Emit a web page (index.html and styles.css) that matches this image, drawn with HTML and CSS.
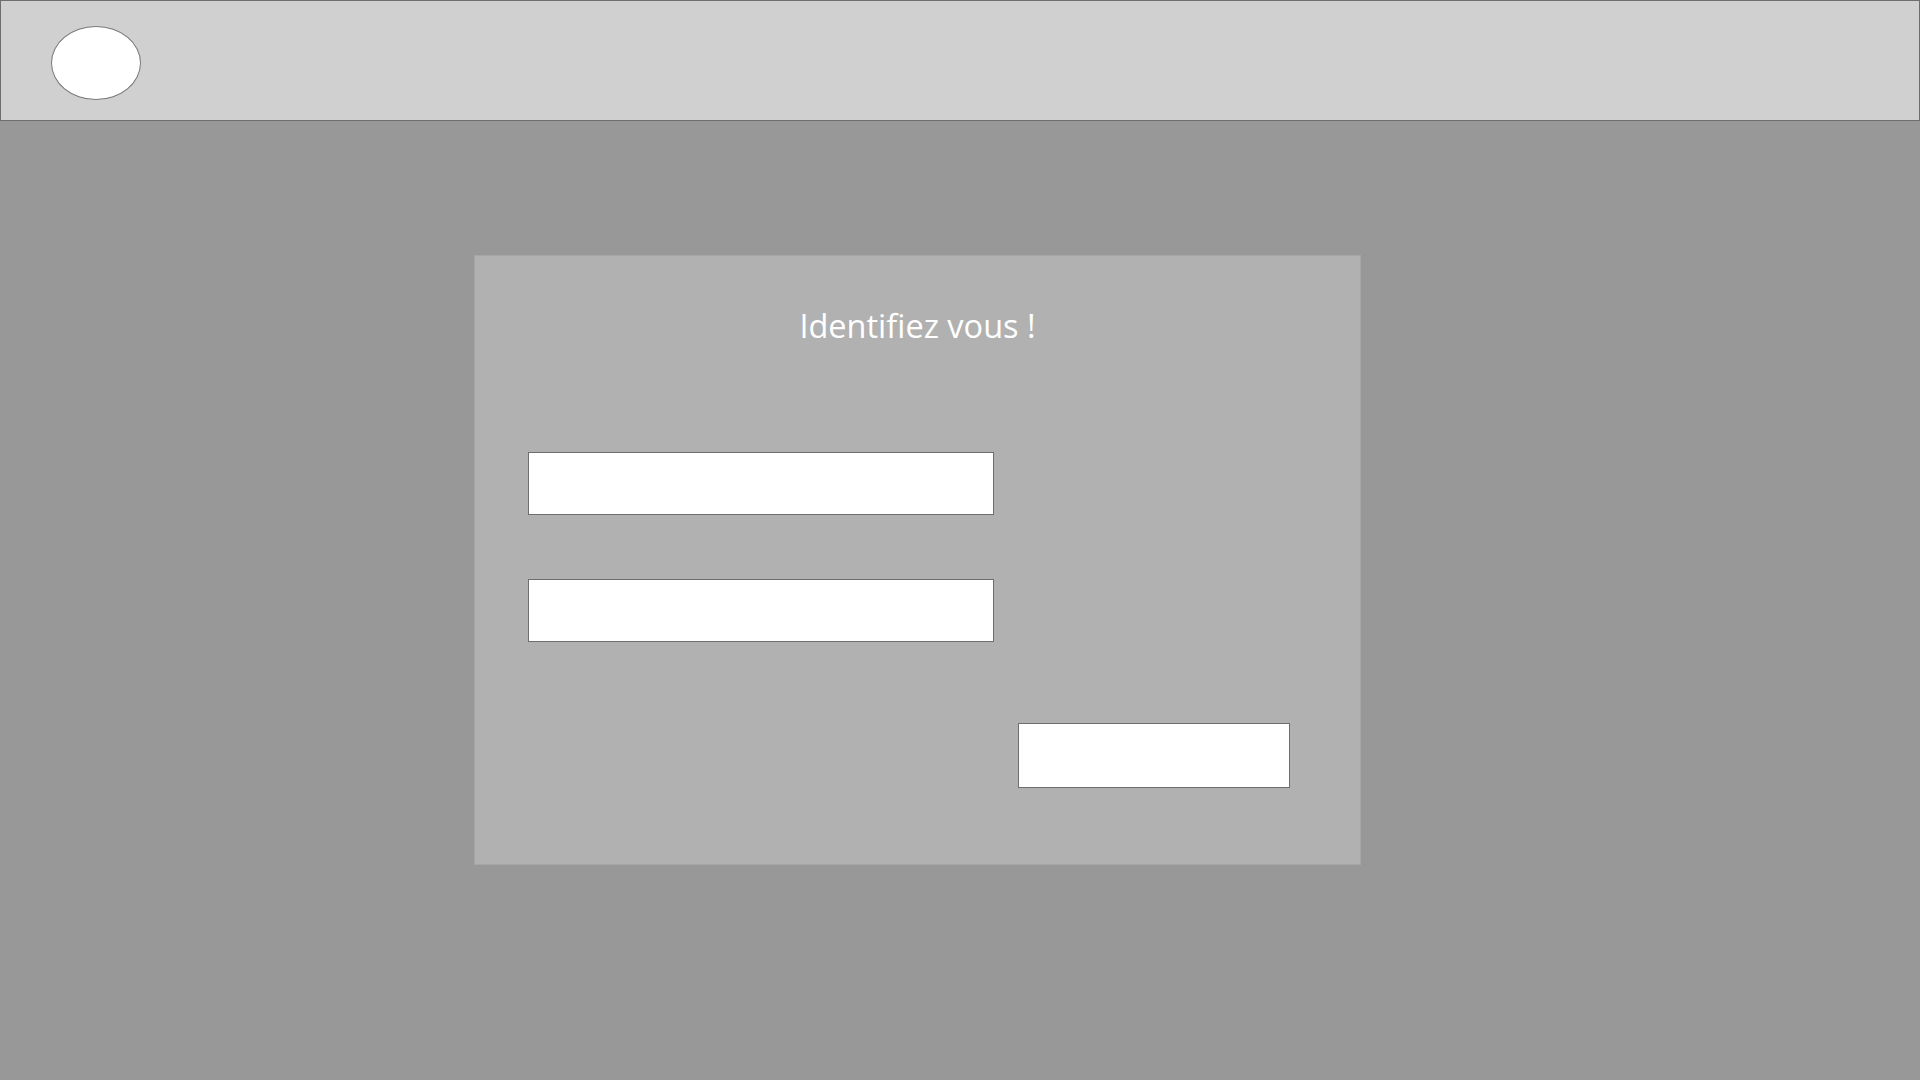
FILE: index.html
```html
<!DOCTYPE html>
<html lang="fr">
<head>
<meta charset="utf-8">
<title>Identification</title>
<link rel="stylesheet" href="styles.css">
</head>
<body>
<header class="topbar">
  <div class="logo"></div>
</header>
<main class="stage">
  <section class="card">
    <h1 class="title">Identifiez vous !</h1>
    <div class="field"></div>
    <div class="field field-second"></div>
    <div class="actions">
      <div class="button"></div>
    </div>
  </section>
</main>
</body>
</html>
```

FILE: styles.css
```css
* { box-sizing: border-box; }
html, body {
  margin: 0;
  padding: 0;
  width: 1920px;
  height: 1080px;
  overflow: hidden;
  background: #989898;
  font-family: "Open Sans", "Noto Sans", sans-serif;
}
.topbar {
  height: 121px;
  background: #d0d0d0;
  border: 1px solid #6e6e6e;
  display: flex;
  align-items: flex-start;
  padding: 25px 0 0 50px;
}
.logo {
  width: 90px;
  height: 74px;
  border-radius: 50%;
  background: #ffffff;
  border: 1px solid #7a7a7a;
}
.stage {
  padding: 134px 0 0 474px;
}
.card {
  width: 887px;
  height: 610px;
  background: #b1b1b1;
  border: 1px solid #a6a6a6;
  padding: 51px 70px 0 53px;
  display: flex;
  flex-direction: column;
}
.title {
  margin: 0;
  font-weight: 400;
  font-size: 32.5px;
  line-height: 38px;
  color: #ffffff;
  text-align: center;
  padding-left: 17px;
}
.field {
  margin-top: 107px;
  width: 466px;
  height: 63px;
  background: #ffffff;
  border: 1px solid #6e6e6e;
}
.field-second {
  margin-top: 64px;
}
.actions {
  margin-top: 81px;
  display: flex;
  justify-content: flex-end;
}
.button {
  width: 272px;
  height: 65px;
  background: #ffffff;
  border: 1px solid #6e6e6e;
}
```
